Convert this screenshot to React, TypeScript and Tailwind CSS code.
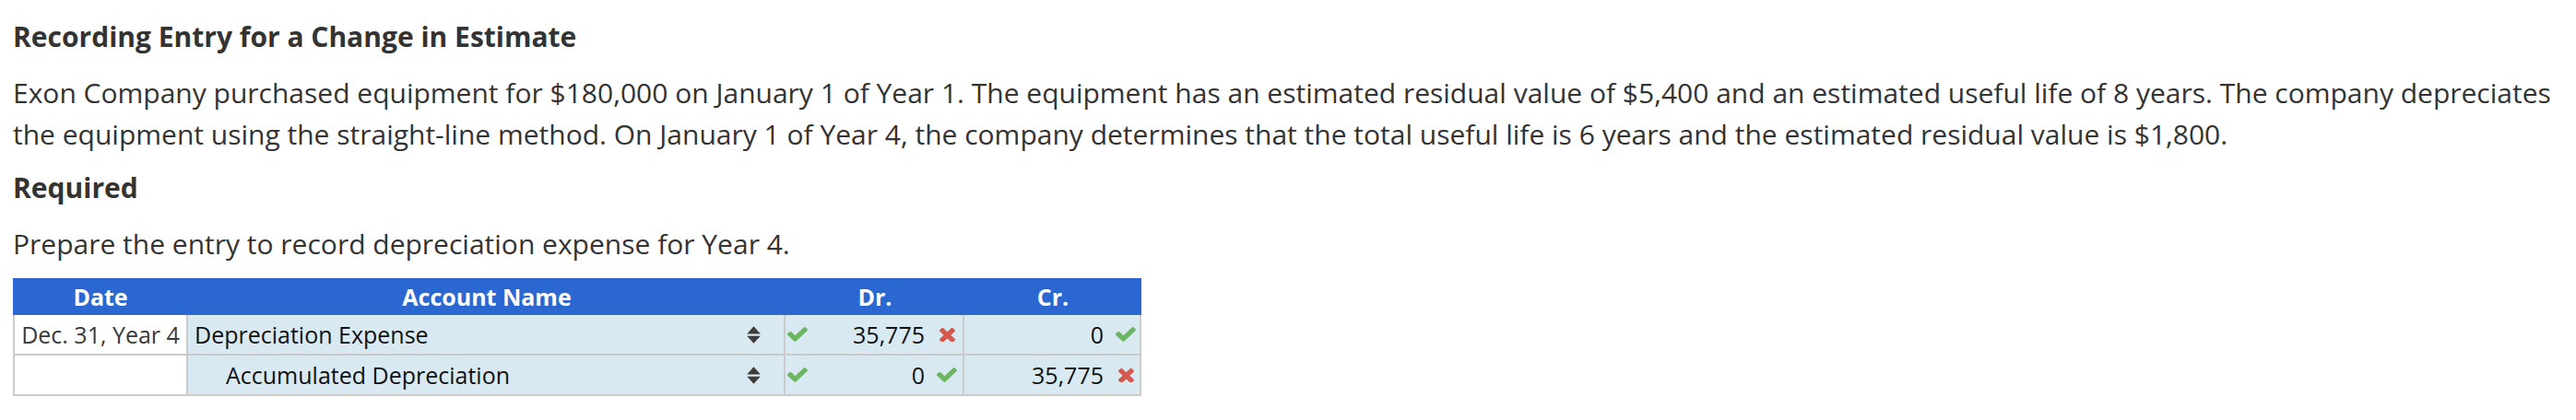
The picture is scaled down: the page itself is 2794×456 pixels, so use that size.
import React from 'react';

const COLS = 'grid grid-cols-[190px_648px_194px_192px]';

function Check() {
  return (
    <svg viewBox="121 334 1550 1188" preserveAspectRatio="none" className="h-[16px] w-[22px] shrink-0" aria-hidden>
      <path
        fill="#6cb661"
        d="M1671 566q0 40-28 68l-724 724-136 136q-28 28-68 28t-68-28l-136-136-362-362q-28-28-28-68t28-68l136-136q28-28 68-28t68 28l294 295 656-657q28-28 68-28t68 28l136 136q28 28 28 68z"
      />
    </svg>
  );
}

function Cross() {
  return (
    <svg viewBox="110 306 1188 1188" preserveAspectRatio="none" className="h-[16px] w-[17px] shrink-0" aria-hidden>
      <path
        fill="#d5584e"
        d="M1298 1322q0 40-28 68l-136 136q-28 28-68 28t-68-28l-294-294-294 294q-28 28-68 28t-68-28l-136-136q-28-28-28-68t28-68l294-294-294-294q-28-28-28-68t28-68l136-136q28-28 68-28t68 28l294 294 294-294q28-28 68-28t68 28l136 136q28 28 28 68t-28 68l-294 294 294 294q28 28 28 68z"
      />
    </svg>
  );
}

function SortArrows() {
  return (
    <svg viewBox="0 0 15 19" className="h-[19px] w-[15px] shrink-0" aria-hidden>
      <path fill="#3d3d3d" d="M7.5 0.3 L14.8 8.4 H0.2 Z M0.2 10.8 H14.8 L7.5 18.8 Z" />
    </svg>
  );
}

type Entry = {
  date: string;
  account: string;
  indent?: boolean;
  dr: string;
  drOk: boolean;
  cr: string;
  crOk: boolean;
};

const rows: Entry[] = [
  { date: 'Dec. 31, Year 4', account: 'Depreciation Expense', dr: '35,775', drOk: false, cr: '0', crOk: true },
  { date: '', account: 'Accumulated Depreciation', indent: true, dr: '0', drOk: true, cr: '35,775', crOk: false },
];

function Amount({ value, ok, pad }: { value: string; ok: boolean; pad: string }) {
  return (
    <div className={`flex h-full items-center justify-end gap-[13px] ${pad}`}>
      <span>{value}</span>
      <span className="flex w-[22px] justify-center">{ok ? <Check /> : <Cross />}</span>
    </div>
  );
}

export default function App() {
  return (
    <div className="min-h-screen bg-white pl-[14px] font-['Open_Sans',sans-serif] text-[#333]">
      <h1 className="pt-[17px] text-[30px] leading-[45px] font-bold">Recording Entry for a Change in Estimate</h1>
      <p className="mt-[15.5px] text-[30px] leading-[45px]">
        Exon Company purchased equipment for $180,000 on January 1 of Year 1. The equipment has an estimated residual
        value of $5,400 and an estimated useful life of 8 years. The company depreciates the equipment using the
        straight-line method. On January 1 of Year 4, the company determines that the total useful life is 6 years and
        the estimated residual value is $1,800.
      </p>
      <h2 className="mt-[13.4px] text-[30px] leading-[45px] font-bold">Required</h2>
      <p className="mt-[16.6px] text-[30px] leading-[45px]">Prepare the entry to record depreciation expense for Year 4.</p>

      <div className="mt-[14.8px] w-[1224px] text-[25px]">
        <div className={`${COLS} h-[40px] items-center bg-[#2a67d0] font-bold text-white`}>
          <div className="text-center">Date</div>
          <div className="text-center">Account Name</div>
          <div className="text-center">Dr.</div>
          <div className="text-center">Cr.</div>
        </div>
        {rows.map((r, i) => (
          <div key={i} className={`${COLS} h-[44px]`}>
            <div className="flex items-center justify-center border-b-2 border-l-2 border-r-2 border-[#cbcbcb] bg-white text-[#3a3a3a]">
              {r.date}
            </div>
            <div className="flex items-center justify-between border-b-2 border-r-2 border-[#cbcbcb] bg-[#d8e9f1] pr-[25px] text-[#111]">
              <span className={r.indent ? 'pl-[41px]' : 'pl-[7px]'}>{r.account}</span>
              <SortArrows />
            </div>
            <div className="relative border-b-2 border-r-2 border-[#cbcbcb] bg-[#d8e9f1] text-[#111]">
              <div className="absolute left-[2px] top-0 flex h-full items-center">
                <Check />
              </div>
              <Amount value={r.dr} ok={r.drOk} pad="pr-[6px]" />
            </div>
            <div className="border-b-2 border-r-2 border-[#cbcbcb] bg-[#d8e9f1] text-[#111]">
              <Amount value={r.cr} ok={r.crOk} pad="pr-[4px]" />
            </div>
          </div>
        ))}
      </div>
    </div>
  );
}
